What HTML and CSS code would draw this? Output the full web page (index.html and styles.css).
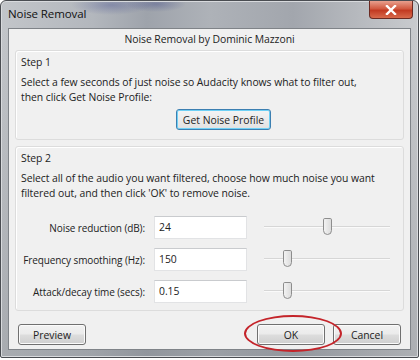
FILE: index.html
```html
<!DOCTYPE html>
<html>
<head>
<meta charset="utf-8">
<link rel="stylesheet" href="styles.css">
</head>
<body>
<div class="window">
  <div class="titlebar">
    <span class="title">Noise Removal</span>
    <div class="close"><svg width="12" height="10" viewBox="0 0 12 10"><path d="M2 1 L10 9 M10 1 L2 9" stroke="#fff" stroke-width="2.4" stroke-linecap="square"/></svg></div>
  </div>
  <div class="client">
    <div class="header">Noise Removal by Dominic Mazzoni</div>
    <div class="group step1">
      <div class="gtitle">Step 1</div>
      <p class="desc">Select a few seconds of just noise so Audacity knows what to filter out,<br>then click Get Noise Profile:</p>
      <div class="center"><button class="btn focus">Get Noise Profile</button></div>
    </div>
    <div class="group step2">
      <div class="gtitle">Step 2</div>
      <p class="desc">Select all of the audio you want filtered, choose how much noise you want<br>filtered out, and then click 'OK' to remove noise.</p>
      <div class="rows">
        <div class="row">
          <label><span>Noise reduction (dB):</span></label>
          <div class="input">24</div>
          <div class="slider"><div class="track"></div><div class="thumb" style="left:59px"></div></div>
        </div>
        <div class="row">
          <label><span>Frequency smoothing (Hz):</span></label>
          <div class="input">150</div>
          <div class="slider"><div class="track"></div><div class="thumb" style="left:19px"></div></div>
        </div>
        <div class="row">
          <label><span>Attack/decay time (secs):</span></label>
          <div class="input">0.15</div>
          <div class="slider"><div class="track"></div><div class="thumb" style="left:19px"></div></div>
        </div>
      </div>
    </div>
    <div class="buttons">
      <button class="btn wide">Preview</button>
      <div class="right">
        <div class="okwrap"><button class="btn wide">OK</button><div class="ring"></div></div>
        <button class="btn wide">Cancel</button>
      </div>
    </div>
  </div>
</div>
</body>
</html>
```

FILE: styles.css
```css
* { box-sizing: border-box; }
html, body { margin: 0; padding: 0; background: #ffffff; }
body { width: 420px; height: 360px; overflow: hidden; font-family: "Open Sans", "DejaVu Sans", sans-serif; font-size: 10.4px; color: #222; letter-spacing: -0.05px; }

.window {
  width: 419px;
  height: 358px;
  display: flex;
  flex-direction: column;
  padding: 0 7px 7px 7px;
  border: 1px solid #4a4d52;
  border-radius: 6px 6px 2px 2px;
  background:
    radial-gradient(ellipse 40px 10px at 110px 4px, rgba(60,70,140,0.35), rgba(60,70,140,0)),
    radial-gradient(ellipse 30px 8px at 155px 3px, rgba(50,60,130,0.35), rgba(50,60,130,0)),
    linear-gradient(180deg, rgba(255,255,255,0) 0px, rgba(255,255,255,0) 28px, rgba(120,124,130,0.35) 100%),
    linear-gradient(90deg, #c2c5c9 0%, #b3b7bd 22%, #9ea3ab 35%, #aeb2b8 50%, #a2a6ad 70%, #c9cbce 100%);
  box-shadow: inset 0 0 0 1px #d8dadd;
}
.titlebar {
  height: 27px;
  display: flex;
  align-items: flex-start;
  justify-content: space-between;
  padding-top: 5px;
}
.title { font-size: 11.5px; color: #111; letter-spacing: -0.1px; }
.close {
  width: 44px; height: 18px;
  margin-top: -5px;
  margin-right: -2px;
  border: 1px solid #6b2a22;
  border-top: none;
  border-radius: 0 0 4px 4px;
  background: linear-gradient(#e8a08e 0%, #d15a41 45%, #c23a22 55%, #d86a4c 100%);
  display: flex; align-items: center; justify-content: center;
}
.client {
  flex: 1;
  background: #f0f0f0;
  border: 1px solid #7f8388;
  display: flex;
  flex-direction: column;
  padding: 3px 6px 0 6px;
}
.header { text-align: center; height: 14px; line-height: 14px; margin-bottom: 4px; }
.group {
  border: 1px solid #dcdcdc;
  border-radius: 3px;
  padding: 4px 5px 6px 5px;
  box-shadow: inset 1px 1px 0 #ffffff;
}
.gtitle { line-height: 14px; margin-bottom: 6px; }
.desc { margin: 0; line-height: 14.5px; }
.step1 { height: 90px; }
.center { display: flex; justify-content: center; margin-top: 5px; padding-left: 28px; }
.step2 { margin-top: 6px; height: 165px; }
.rows { margin-top: 16px; display: flex; flex-direction: column; gap: 9px; }
.row { display: flex; align-items: center; height: 23px; }
.row label { width: 124px; flex-shrink: 0; display: flex; justify-content: flex-end; white-space: nowrap; font-size: 10px; letter-spacing: -0.1px; }
.input {
  margin-left: 9px;
  width: 93px; height: 23px;
  background: #fff;
  border: 1px solid #e2e3e5;
  border-top-color: #c9cbce;
  padding: 3px 4px;
  line-height: 14px;
}
.slider { position: relative; margin-left: 17px; width: 126px; height: 23px; }
.track { position: absolute; left: 0; right: 0; top: 10px; height: 2px; background: #d6d6d6; border-bottom: 1px solid #fafafa; }
.thumb {
  position: absolute; top: 2px; width: 9px; height: 17px;
  background: linear-gradient(90deg, #f2f2f2, #dcdcdc);
  border: 1px solid #8d8d8d;
  border-radius: 2px 2px 5px 5px;
}
.btn {
  font-family: inherit; font-size: 10.4px; color: #222;
  height: 21px;
  border: 1px solid #707070;
  border-radius: 3px;
  background: linear-gradient(#f2f2f2 0%, #ebebeb 48%, #dddddd 52%, #cfcfcf 100%);
  box-shadow: inset 0 0 0 1px #fbfbfb;
  padding: 0 6px;
}
.btn.focus { border-color: #3c7fb1; box-shadow: inset 0 0 0 1px #6fd0f5; background: linear-gradient(#f4f4f4, #e2e2e2); }
.btn.wide { width: 68px; }
.buttons { display: flex; justify-content: space-between; align-items: center; margin-top: 13px; padding: 0 3px; }
.right { display: flex; gap: 8px; }
.okwrap { position: relative; }
.ring {
  position: absolute; left: -13px; top: -9px; width: 98px; height: 37px;
  border: 2px solid #c4242a; border-radius: 50%;
}
```
